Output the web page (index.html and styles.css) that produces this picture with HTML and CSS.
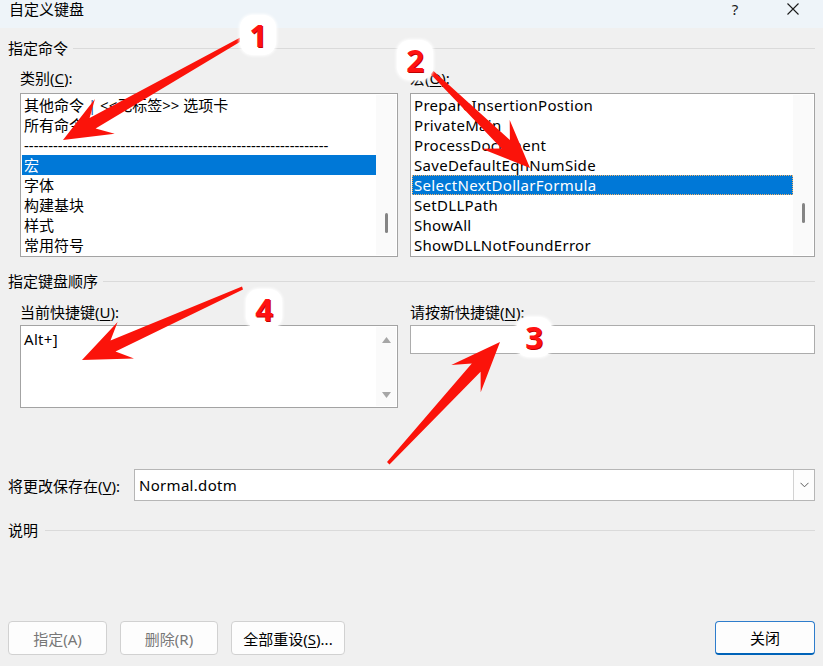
FILE: index.html
```html
<!DOCTYPE html>
<html lang="zh-CN">
<head>
<meta charset="utf-8">
<title>自定义键盘</title>
<link rel="stylesheet" href="styles.css">
</head>
<body>
<div class="window">
  <div class="titlebar">
    <span class="title">自定义键盘</span>
    <span class="help">?</span>
    <svg class="close" width="12" height="12" viewBox="0 0 12 12"><path d="M0.5 0.5 L11.5 11.5 M11.5 0.5 L0.5 11.5" stroke="#1b1b1b" stroke-width="1.1" fill="none"/></svg>
  </div>

  <div class="content">
    <div class="group-head"><span>指定命令</span><i class="rule"></i></div>
    <div class="pair">
      <div class="field">
        <div class="label">类别(<u>C</u>):</div>
        <div class="listbox">
          <ul class="items">
            <li>其他命令 <span class="bar">|</span> &lt;&lt;无标签&gt;&gt; 选项卡</li>
            <li>所有命令</li>
            <li>---------------------------------------------------------------</li>
            <li class="sel">宏</li>
            <li>字体</li>
            <li>构建基块</li>
            <li>样式</li>
            <li>常用符号</li>
          </ul>
          <div class="vscroll"><span class="thumb thumb-left"></span></div>
        </div>
      </div>
      <div class="field">
        <div class="label">宏(<u>O</u>):</div>
        <div class="listbox">
          <ul class="items latin">
            <li>PrepareInsertionPostion</li>
            <li>PrivateMain</li>
            <li>ProcessDocument</li>
            <li>SaveDefaultEqnNumSide</li>
            <li class="sel focus">SelectNextDollarFormula</li>
            <li>SetDLLPath</li>
            <li>ShowAll</li>
            <li>ShowDLLNotFoundError</li>
          </ul>
          <div class="vscroll"><span class="thumb thumb-right"></span></div>
        </div>
      </div>
    </div>

    <div class="group-head second"><span>指定键盘顺序</span><i class="rule"></i></div>
    <div class="pair keys-pair">
      <div class="field">
        <div class="label">当前快捷键(<u>U</u>):</div>
        <div class="keybox">
          <div class="keytext latin">Alt+]</div>
          <div class="vscroll arrows">
            <svg width="9" height="6" viewBox="0 0 9 6"><path d="M4.5 0 L9 6 L0 6 Z" fill="#a6a6a6"/></svg>
            <svg width="9" height="6" viewBox="0 0 9 6"><path d="M0 0 L9 0 L4.5 6 Z" fill="#a6a6a6"/></svg>
          </div>
        </div>
      </div>
      <div class="field">
        <div class="label">请按新快捷键(<u>N</u>):</div>
        <div class="newkey"></div>
      </div>
    </div>

    <div class="save-row">
      <span class="save-label">将更改保存在(<u>V</u>):</span>
      <div class="combo">
        <span class="combo-value latin">Normal.dotm</span>
        <span class="combo-drop"><svg width="9" height="6" viewBox="0 0 9 6"><path d="M0.5 0.8 L4.5 4.8 L8.5 0.8" stroke="#5a5a5a" stroke-width="1" fill="none"/></svg></span>
      </div>
    </div>

    <div class="group-head third"><span>说明</span><i class="rule"></i></div>

    <div class="buttons">
      <button class="btn disabled w99">指定(A)</button>
      <button class="btn disabled w98">删除(R)</button>
      <button class="btn w114">全部重设(<u>S</u>)...</button>
      <button class="btn primary w100">关闭</button>
    </div>
  </div>

  <!-- callout arrows drawn over the dialog -->
  <svg class="marks" width="823" height="666" viewBox="0 0 823 666">
    <g fill="#fb130a">
      <polygon points="244,35.5 89.6,118 94.9,98.9 63,140 114.7,133.7 95.6,128.4 246.5,38"/>
      <polygon points="430.5,74 501.5,148.5 481.7,148.7 530,168 509.7,120.1 509.9,139.9 433.5,71"/>
      <polygon points="387,462 471.8,363.6 451.3,365.1 500,342 480.7,392.3 480.6,371.8 389.5,464.5"/>
      <polygon points="242,286.5 110.5,340.6 117.6,322.1 82,360 134,358.5 115.5,351.6 243,289.5"/>
    </g>
  </svg>
  <div class="badge b1">1</div>
  <div class="badge b2">2</div>
  <div class="badge b3">3</div>
  <div class="badge b4">4</div>
</div>
</body>
</html>
```

FILE: styles.css
```css
* {
  box-sizing: border-box;
}

html,
body {
  margin: 0;
  padding: 0;
}

body {
  width: 823px;
  height: 666px;
  overflow: hidden;
  background: #f0f0f0;
  font-family: "Noto Sans", "Noto Sans CJK SC", sans-serif;
  font-size: 15px;
  color: #000;
}

.window {
  position: relative;
  width: 823px;
  height: 666px;
}

/* title bar */
.titlebar {
  height: 28px;
  background: #eef4f9;
  display: flex;
  align-items: flex-start;
  padding: 0 24px 0 9px;
  line-height: 19px;
}

.title {
  flex: 1;
}

.help {
  width: 20px;
  text-align: center;
  margin-right: 42px;
  color: #1b1b1b;
}

.close {
  margin-top: 3px;
}

/* dialog body */
.content {
  padding: 0 8px;
}

.group-head {
  display: flex;
  align-items: center;
  height: 20px;
  line-height: 20px;
  margin-top: 10px;
}

.group-head.second {
  margin-top: 14px;
}

.group-head.third {
  margin-top: 19px;
}

.group-head.third .rule {
  margin-left: 7px;
}

.rule {
  flex: 1;
  height: 1px;
  background: #dadada;
  margin-left: 5px;
}

.pair {
  display: grid;
  grid-template-columns: 378px 405px;
  column-gap: 12px;
  padding-left: 12px;
}

.label {
  height: 20px;
  line-height: 20px;
  margin-top: 10px;
  margin-bottom: 5px;
}

.keys-pair .label {
  margin-top: 11px;
  margin-bottom: 3px;
}

u {
  text-decoration: underline;
  text-underline-offset: 2px;
}

.latin {
  letter-spacing: 0.3px;
}

.listbox {
  height: 164px;
  border: 1px solid #a3a3a3;
  background: #fff;
  display: flex;
  padding: 1px;
}

.items {
  flex: 1;
  list-style: none;
  margin: 0;
  padding: 0;
  min-width: 0;
}

.items li {
  height: 20px;
  line-height: 20px;
  padding-left: 2px;
  white-space: nowrap;
  overflow: hidden;
}

.items li.sel {
  background: #0078d7;
  color: #fff;
}

.items li.focus {
  outline: 1px dotted #f2b36b;
  outline-offset: -1px;
}

.bar {
  color: #1a5aa8;
}

.vscroll {
  width: 20px;
  background: #fafafa;
  display: flex;
  flex-direction: column;
  align-items: center;
}

.thumb {
  width: 3px;
  height: 20px;
  border-radius: 2px;
  background: #858585;
}

.thumb-left {
  margin-top: 118px;
}

.thumb-right {
  margin-top: 108px;
}

.keybox {
  height: 83px;
  border: 1px solid #a3a3a3;
  background: #fff;
  display: flex;
  padding: 1px;
}

.keytext {
  flex: 1;
  line-height: 20px;
  padding: 2px 0 0 2px;
}

.vscroll.arrows {
  justify-content: space-between;
  padding: 10px 0 8px;
}

.newkey {
  height: 29px;
  border: 1px solid #acacac;
  background: #fff;
}

.save-row {
  display: flex;
  align-items: center;
  height: 32px;
  margin-top: 61px;
}

.save-label {
  width: 126px;
}

.combo {
  flex: 1;
  height: 32px;
  border: 1px solid #b6b6b6;
  background: #fff;
  display: flex;
  align-items: stretch;
}

.combo-value {
  flex: 1;
  line-height: 30px;
  padding-left: 4px;
}

.combo-drop {
  width: 21px;
  border-left: 1px solid #d2d2d2;
  background: #fdfdfd;
  display: flex;
  align-items: center;
  justify-content: center;
}

.buttons {
  display: flex;
  gap: 13px;
  margin-top: 81px;
}

.btn {
  height: 34px;
  border: 1px solid #d1d1d1;
  border-radius: 4px;
  background: #fdfdfd;
  font: inherit;
  color: #000;
  padding: 0;
}

.btn.disabled {
  color: #777;
}

.btn.primary {
  margin-left: auto;
  border: 1px solid #2e7dcc;
  border-bottom: 2px solid #0063b8;
}

.w99 { width: 99px; }
.w98 { width: 98px; }
.w114 { width: 114px; }
.w100 { width: 100px; }

/* callouts */
.marks {
  position: absolute;
  left: 0;
  top: 0;
  pointer-events: none;
}

.badge {
  position: absolute;
  width: 36px;
  height: 40px;
  border-radius: 13px;
  background: #fff;
  box-shadow: 0 0 3px 1px #fff;
  color: #ff1212;
  font-family: "Noto Sans", sans-serif;
  font-weight: 700;
  font-size: 31px;
  line-height: 40px;
  text-align: center;
  text-shadow: 1px 1px 0 #c00000;
}

.b1 { left: 240px; top: 15px; }
.b2 { left: 397px; top: 40px; }
.b3 { left: 516px; top: 317px; }
.b4 { left: 246px; top: 289px; }
```
